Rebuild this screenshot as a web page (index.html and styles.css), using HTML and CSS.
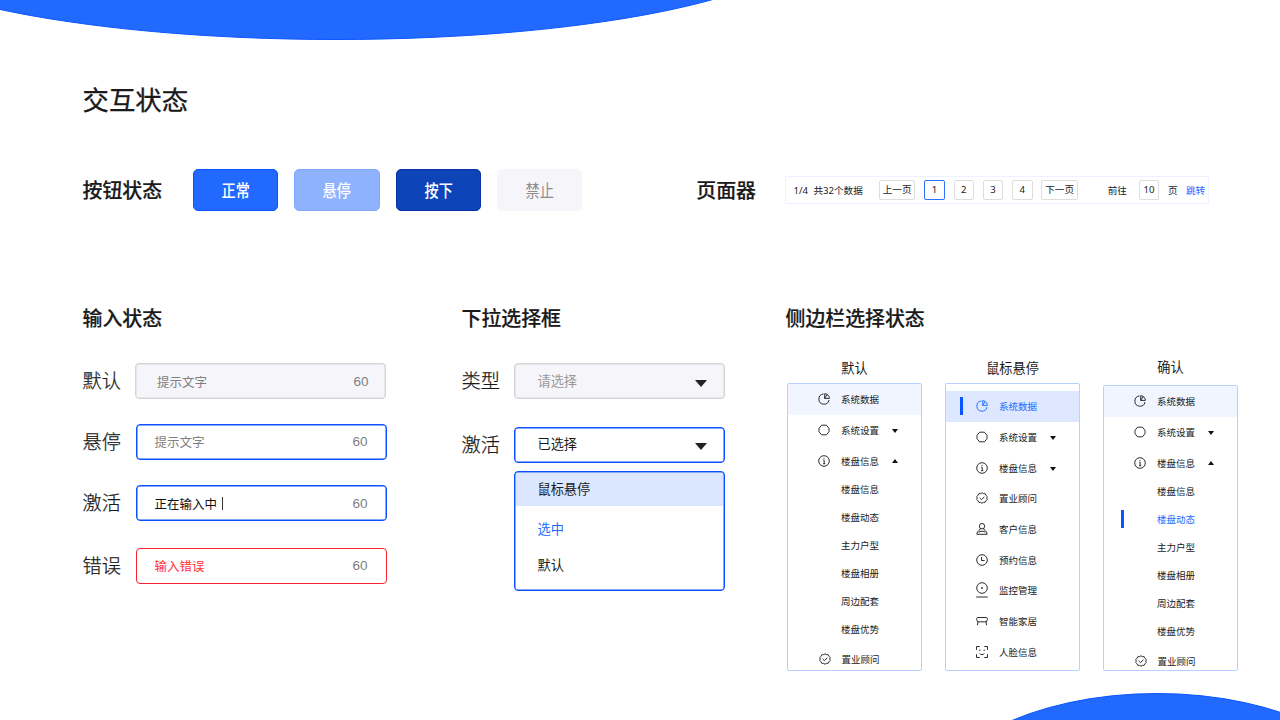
FILE: index.html
```
<!DOCTYPE html>
<html lang="zh-CN">
  <head>
    <meta charset="utf-8">
    <title>交互状态</title>
    <link rel="stylesheet" href="styles.css">
  </head>
  <body>
    <!-- Background shapes -->
    <svg class="wave wave-top" viewBox="0 0 720 41"><ellipse cx="336" cy="-65.500" rx="480" ry="105"/></svg>
    <svg class="wave wave-bottom" viewBox="0 0 280 28"><ellipse cx="157" cy="122" rx="230" ry="120.500"/></svg>

    <!-- Icons -->
    <svg class="sprite" width="0" height="0">
      <symbol id="pie" viewBox="0 0 12 12"><path d="M5.500 1A5.100 5.100 0 1 0 11 7M6.700.7v4.700h4.700A4.800 4.800 0 0 0 6.700.7zM6.700 5.400L9 1.600"/></symbol>
      <symbol id="hexagon" viewBox="0 0 12 12"><path d="M3.600 1.200h4.800L11 4.300v3.400L8.400 10.800H3.600L1 7.700V4.300z"/></symbol>
      <symbol id="info" viewBox="0 0 12 12"><circle cx="6" cy="6" r="5.300"/><path d="M5.200 5.200h1v3.400M5 8.700h2.300M6 2.900v1"/></symbol>
      <symbol id="badge" viewBox="0 0 12 12"><path d="M6 .8l1.500.8 1.700.1.800 1.500 1.200 1.200-.4 1.600.4 1.600L10 8.800l-.8 1.500-1.700.1L6 11.200l-1.500-.8-1.700-.1L2 8.800.8 7.600 1.200 6 .8 4.400 2 3.200l.8-1.500 1.700-.1z"/><path d="M3.600 5.900l1.900 1.800 2.900-3"/></symbol>
      <symbol id="user" viewBox="0 0 12 12"><circle cx="6" cy="3.200" r="2.700"/><path d="M4.200 5.600L3.700 7C2 7.800.9 9.500.9 11.300h10.200C11.100 9.500 10 7.800 8.300 7l-.5-1.400M2.600 9.300C4 7.900 8 7.900 9.400 9.300"/></symbol>
      <symbol id="clock" viewBox="0 0 12 12"><circle cx="6" cy="6" r="5.300"/><path d="M5.600 3v3.500h3"/></symbol>
      <symbol id="camera" viewBox="0 0 12 16"><circle cx="6" cy="6" r="5.300"/><circle class="dot" cx="6" cy="6" r=".5"/><path d="M.2 15h11.600"/></symbol>
      <symbol id="sofa" viewBox="0 0 12 12"><path d="M2 2.500h8c1.300 0 1.800 1 1.300 2l-.8 2.300h-9L.7 4.500c-.5-1 0-2 1.300-2zM2 6.800L1.400 10.200M10 6.800l.6 3.400"/></symbol>
      <symbol id="face" viewBox="0 0 12 12"><path d="M.5 3.800V.5h3.300M8.200.5h3.300v3.300M11.500 8.200v3.300H8.200M3.800 11.500H.5V8.200M3.800 3.500v1.500M8.200 3.500v1.500M3.600 7.500c1.300 1.500 3.500 1.500 4.800 0"/></symbol>
    </svg>

    <div class="page">
      <h1>交互状态</h1>

      <div class="top-row">
        <h2>按钮状态</h2>
        <div class="buttons">
          <button class="btn"><span>正常</span></button>
          <button class="btn btn-hover"><span>悬停</span></button>
          <button class="btn btn-press"><span>按下</span></button>
          <button class="btn btn-disabled"><span>禁止</span></button>
        </div>
        <h2>页面器</h2>
        <div class="pager">
          <span class="pos">1/4</span>
          <span class="total">共32个数据</span>
          <a class="pg pg-wide">上一页</a>
          <a class="pg pg-on">1</a>
          <a class="pg">2</a>
          <a class="pg">3</a>
          <a class="pg">4</a>
          <a class="pg pg-wide">下一页</a>
          <span class="goto">前往</span>
          <span class="pg">10</span>
          <span class="unit">页</span>
          <a class="jump">跳转</a>
        </div>
      </div>

      <div class="columns">
        <div class="inputs">
          <h2>输入状态</h2>
          <div class="field">
            <label>默认</label>
            <div class="input input-default"><span>提示文字</span><span class="count">60</span></div>
          </div>
          <div class="field">
            <label>悬停</label>
            <div class="input input-hover"><span>提示文字</span><span class="count">60</span></div>
          </div>
          <div class="field">
            <label>激活</label>
            <div class="input input-active"><span>正在输入中</span><i class="cursor"></i><span class="count">60</span></div>
          </div>
          <div class="field">
            <label>错误</label>
            <div class="input input-error"><span>输入错误</span><span class="count">60</span></div>
          </div>
        </div>

        <div class="selects">
          <h2>下拉选择框</h2>
          <div class="field">
            <label>类型</label>
            <div class="select select-default"><span>请选择</span><i class="arrow"></i></div>
          </div>
          <div class="field">
            <label>激活</label>
            <div class="select"><span>已选择</span><i class="arrow"></i></div>
          </div>
          <ul class="options">
            <li class="hover">鼠标悬停</li>
            <li class="selected">选中</li>
            <li>默认</li>
          </ul>
        </div>

        <div class="sidebars">
          <h2>侧边栏选择状态</h2>
          <div class="menus">
            <div class="menu-col">
              <h3>默认</h3>
              <ul class="menu">
                <li class="first"><svg><use href="#pie"/></svg>系统数据</li>
                <li><svg><use href="#hexagon"/></svg>系统设置<i class="caret"></i></li>
                <li><svg><use href="#info"/></svg>楼盘信息<i class="caret up"></i></li>
                <li class="sub">楼盘信息</li>
                <li class="sub">楼盘动态</li>
                <li class="sub">主力户型</li>
                <li class="sub">楼盘相册</li>
                <li class="sub">周边配套</li>
                <li class="sub">楼盘优势</li>
                <li class="last"><svg><use href="#badge"/></svg>置业顾问</li>
              </ul>
            </div>

            <div class="menu-col">
              <h3>鼠标悬停</h3>
              <ul class="menu menu-hover">
                <li class="current"><svg><use href="#pie"/></svg>系统数据</li>
                <li><svg><use href="#hexagon"/></svg>系统设置<i class="caret"></i></li>
                <li><svg><use href="#info"/></svg>楼盘信息<i class="caret"></i></li>
                <li><svg><use href="#badge"/></svg>置业顾问</li>
                <li><svg><use href="#user"/></svg>客户信息</li>
                <li><svg><use href="#clock"/></svg>预约信息</li>
                <li><svg class="tall"><use href="#camera"/></svg>监控管理</li>
                <li><svg><use href="#sofa"/></svg>智能家居</li>
                <li><svg><use href="#face"/></svg>人脸信息</li>
              </ul>
            </div>

            <div class="menu-col menu-col-confirm">
              <h3>确认</h3>
              <ul class="menu">
                <li class="first"><svg><use href="#pie"/></svg>系统数据</li>
                <li><svg><use href="#hexagon"/></svg>系统设置<i class="caret"></i></li>
                <li><svg><use href="#info"/></svg>楼盘信息<i class="caret up"></i></li>
                <li class="sub">楼盘信息</li>
                <li class="sub current">楼盘动态</li>
                <li class="sub">主力户型</li>
                <li class="sub">楼盘相册</li>
                <li class="sub">周边配套</li>
                <li class="sub">楼盘优势</li>
                <li class="last"><svg><use href="#badge"/></svg>置业顾问</li>
              </ul>
            </div>
          </div>
        </div>
      </div>
    </div>
  </body>
</html>
```
FILE: styles.css
```
* {
  box-sizing: border-box;
}
body {
  margin: 0;
  width: 1280px;
  height: 720px;
  position: relative;
  overflow: hidden;
  background: #fff;
  color: #1a1a1a;
  font-family: "Noto Sans CJK SC", sans-serif;
}
h1, h2, h3, ul {
  margin: 0;
  padding: 0;
  list-style: none;
}
.sprite {
  position: absolute;
}

/* background shapes */
.wave {
  position: absolute;
  fill: #226aff;
  stroke: #0a55ff;
  stroke-width: 1px;
}
.wave-top {
  left: 0;
  top: 0;
  width: 720px;
  height: 41px;
}
.wave-bottom {
  right: 0;
  bottom: 0;
  width: 280px;
  height: 28px;
}

.page {
  position: relative;
  padding: 79px 0 0 82.500px;
}
h1 {
  height: 40px;
  line-height: 40px;
  font-size: 26.400px;
  font-weight: 400;
  -webkit-text-stroke: .3px #1a1a1a;
}
h2 {
  height: 30px;
  line-height: 30px;
  font-size: 19.900px;
  font-weight: 500;
  white-space: nowrap;
  -webkit-text-stroke: .2px #1a1a1a;
}

/* buttons and pager */
.top-row {
  display: flex;
  align-items: center;
  height: 42px;
  margin-top: 50px;
}
.buttons {
  display: flex;
  gap: 16px;
  margin-left: 31px;
  margin-right: 114px;
}
.btn {
  width: 85.300px;
  height: 42px;
  padding: 0;
  border: 1px solid #0c52ff;
  border-radius: 5px;
  background: #226aff;
  color: #fff;
  font-family: inherit;
  font-size: 17px;
  font-weight: 500;
  line-height: 38px;
}
.btn span {
  display: block;
  transform: scaleX(.83);
}
.btn-hover {
  background: #8fb2ff;
  border-color: #7fa8ff;
}
.btn-press {
  background: #0d45b9;
  border-color: #0a30a8;
}
.btn-disabled {
  background: #f5f5fa;
  border-color: #f5f5fa;
  color: #8c8c8c;
  font-weight: 400;
}
.pager {
  display: flex;
  align-items: center;
  width: 424px;
  height: 28px;
  margin-left: 29px;
  padding-left: 7.500px;
  border: 1px solid #ecf2ff;
  font-family: "Noto Sans", "Noto Sans CJK SC", sans-serif;
  font-size: 9.600px;
  white-space: nowrap;
}
.pager .pos {
  width: 20px;
}
.pager .total {
  width: 65.500px;
}
.pg {
  width: 20.500px;
  height: 20px;
  margin-right: 8.800px;
  border: 1px solid #ddd;
  border-radius: 2px;
  line-height: 18px;
  text-align: center;
}
.pg-wide {
  width: 36.500px;
}
.pg-on {
  border-color: #2f70ff;
}
.goto {
  width: 31px;
  margin-left: 21px;
}
.unit {
  width: 18px;
}
.jump {
  color: #1e66ff;
}

/* lower part */
.columns {
  display: grid;
  grid-template-columns: 379px 324px 1fr;
  margin-top: 92px;
}
.field {
  display: flex;
  align-items: center;
  height: 36px;
}
.field label {
  width: 52px;
  font-size: 19.200px;
  font-weight: 300;
  line-height: 32px;
  padding-bottom: 2px;
  -webkit-text-stroke: .25px #1a1a1a;
}
.inputs .field {
  margin-bottom: 25.500px;
}
.inputs h2, .selects h2 {
  margin-bottom: 30px;
}
.input, .select {
  display: flex;
  align-items: center;
  height: 36px;
  border: 1px solid #0d50ff;
  border-radius: 4px;
  background: #fff;
  box-shadow: inset 0 0 0 .500px #0d50ff;
}
.input {
  width: 251px;
  margin-left: 1px;
  padding: 0 18px;
  font-size: 12.500px;
  color: #808080;
}
.input-default, .select-default {
  border-color: #d4d4d4;
  background: #f5f5fa;
  box-shadow: inset 0 0 0 .500px #d9d9d9;
}
.input-default {
  margin-left: 0;
  padding-right: 16px;
  padding-left: 21.500px;
}
.inputs .field:nth-child(3), .inputs .field:nth-child(4) {
  position: relative;
  top: -1px;
}
.input-active {
  color: #111;
}
.input-error {
  border-color: #f5222d;
  color: #ff3338;
  box-shadow: none;
}
.count {
  margin-left: auto;
  color: #808080;
  font-family: "Liberation Sans", sans-serif;
  font-size: 13.500px;
}
.cursor {
  width: 1px;
  height: 13px;
  margin-left: 4.500px;
  background: #333;
}

.selects .field {
  margin-bottom: 27.500px;
}
.select {
  width: 211px;
  padding: 0 17px 2px 23px;
  font-size: 13.200px;
}
.select-default {
  color: #999;
}
.arrow {
  margin-left: auto;
  margin-top: 6px;
  border: 6.500px solid transparent;
  border-top: 7.500px solid #222;
  border-bottom: 0;
}
.options {
  width: 211px;
  height: 120px;
  margin: -19px 0 0 52px;
  padding: 1px;
  border: 1px solid #0d50ff;
  border-radius: 4px;
  box-shadow: inset 0 0 0 .500px #0d50ff;
  font-size: 13.200px;
}
.options li {
  height: 36px;
  padding-left: 22px;
  line-height: 36px;
}
.options .hover {
  height: 33px;
  margin-bottom: 5px;
  line-height: 32px;
  background: #dbe6ff;
}
.options .selected {
  color: #226aff;
}

/* side menus */
.menus {
  display: flex;
  gap: 23px;
  margin-left: 1.500px;
}
.menu-col {
  width: 135px;
  padding-top: 23px;
}
h3 {
  height: 27px;
  line-height: 24px;
  font-size: 13.200px;
  font-weight: 400;
  text-align: center;
}
.menu-col-confirm h3 {
  height: 29px;
  line-height: 21px;
}
.menu {
  height: 288px;
  border: 1px solid #b8d0ff;
  border-radius: 2px;
  font-size: 9.500px;
  font-weight: 400;
}
.menu-col-confirm .menu {
  height: 286px;
}
.menu li {
  display: flex;
  align-items: center;
  position: relative;
  height: 30.700px;
  padding-left: 30px;
}
.menu svg {
  width: 12px;
  height: 12px;
  margin-right: 11px;
  fill: none;
  stroke: #222;
  stroke-width: .95;
}
.menu svg.tall {
  height: 16px;
}
.dot {
  fill: #222;
}
.menu .first {
  background: #f1f5ff;
}
.menu .sub {
  height: 28px;
  padding-left: 53px;
  padding-bottom: 2px;
}
.menu .last {
  padding-left: 30.500px;
}
.menu .current {
  color: #226aff;
}
.menu .current svg {
  stroke: #226aff;
}
.menu .current::before {
  content: "";
  position: absolute;
  left: 17px;
  width: 3px;
  height: 18px;
  background: #0a55ff;
}
.menu-hover {
  padding-top: 7px;
}
.menu-hover .current {
  background: #dde7ff;
}
.menu-hover .current::before {
  left: 14px;
}
.caret {
  margin-left: 13px;
  margin-top: 2px;
  border: 3.500px solid transparent;
  border-top: 4px solid #111;
  border-bottom: 0;
}
.caret.up {
  margin-top: 0;
  border-top: 0;
  border-bottom: 4px solid #111;
}
```
